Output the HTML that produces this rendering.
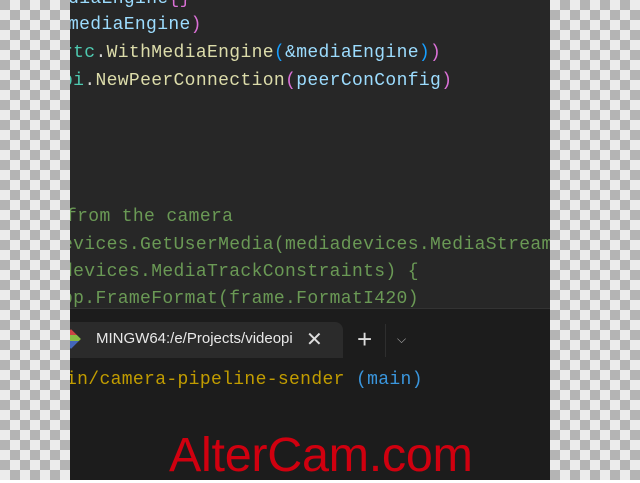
<!DOCTYPE html><html><head><style>
body{margin:0;width:640px;height:480px;overflow:hidden;position:relative;background:#fff}
.chk{position:absolute;top:0;height:480px;background-color:#ececec;background-image:linear-gradient(45deg,#b4b4b4 25%,transparent 25%,transparent 75%,#b4b4b4 75%),linear-gradient(45deg,#b4b4b4 25%,transparent 25%,transparent 75%,#b4b4b4 75%);background-size:20px 20px}
#l{left:0;width:70px;background-position:10px 0,0 10px}
#r{left:550px;width:90px;background-position:0 0,10px 10px}
#p{position:absolute;left:70px;top:0;width:480px;height:480px;background:#272727;overflow:hidden}
.c{position:absolute;font:18px "Liberation Mono",monospace;white-space:pre;line-height:20px;letter-spacing:0.35px}
.v{color:#9cdcfe}.f{color:#dcdcaa}.t{color:#4ec9b0}.pp{color:#da70d6}.b{color:#179fff}.g{color:#6a9955}.w{color:#d4d4d4}
#term{position:absolute;left:0;top:308px;width:480px;height:172px;background:#1c1c1c;border-top:1px solid #333}
</style></head><body>
<div id="l" class="chk"></div><div id="r" class="chk"></div>
<div id="p">
<div class="c" style="left:-13px;top:-11px"><span class="v">ediaEngine</span><span class="pp">{}</span></div>
<div class="c" style="left:-2px;top:15px"><span class="v">mediaEngine</span><span class="pp">)</span></div>
<div class="c" style="left:-8px;top:43px"><span class="t">rtc</span><span class="w">.</span><span class="f">WithMediaEngine</span><span class="b">(</span><span class="v">&amp;mediaEngine</span><span class="b">)</span><span class="pp">)</span></div>
<div class="c" style="left:-8px;top:71px"><span class="t">pi</span><span class="w">.</span><span class="f">NewPeerConnection</span><span class="pp">(</span><span class="v">peerConConfig</span><span class="pp">)</span></div>
<div class="c g" style="left:-4px;top:207px">from the camera</div>
<div class="c g" style="left:-8px;top:235px">evices.GetUserMedia(mediadevices.MediaStream</div>
<div class="c g" style="left:-8px;top:262px">devices.MediaTrackConstraints) {</div>
<div class="c g" style="left:-8px;top:289px">pp.FrameFormat(frame.FormatI420)</div>
<div id="term">
<div style="position:absolute;left:0;top:13px;width:273px;height:36px;background:#2b2b2b;border-radius:0 8px 0 0"></div>
<div style="position:absolute;left:-6px;top:23px;width:14px;height:14px;background:linear-gradient(135deg,#c44 0 30%,#8b4 30% 60%,#46b 60%);transform:rotate(45deg)"></div>
<div style="position:absolute;left:26px;top:21px;font:15px 'Liberation Sans',sans-serif;color:#e8e8e8">MINGW64:/e/Projects/videopi</div>
<div style="position:absolute;left:236px;top:18px;font:20px 'Liberation Sans',sans-serif;color:#ddd">✕</div>
<div style="position:absolute;left:287px;top:15px;font:26px 'Liberation Sans',sans-serif;color:#ddd">+</div>
<div style="position:absolute;left:315px;top:15px;width:1px;height:33px;background:#2e2e2e"></div>
<div style="position:absolute;left:327px;top:23px;font:12px 'Liberation Sans',sans-serif;color:#aaa">⌵</div>
<div class="c" style="left:-4px;top:61px"><span style="color:#c19c00">in/camera-pipeline-sender </span><span style="color:#3a96dd">(main)</span></div>
</div>
</div>
<div style="position:absolute;left:169px;top:427px;font:48.5px 'Liberation Sans',Arial,sans-serif;color:#d0000f;letter-spacing:-0.3px">AlterCam.com</div>
</body></html>
